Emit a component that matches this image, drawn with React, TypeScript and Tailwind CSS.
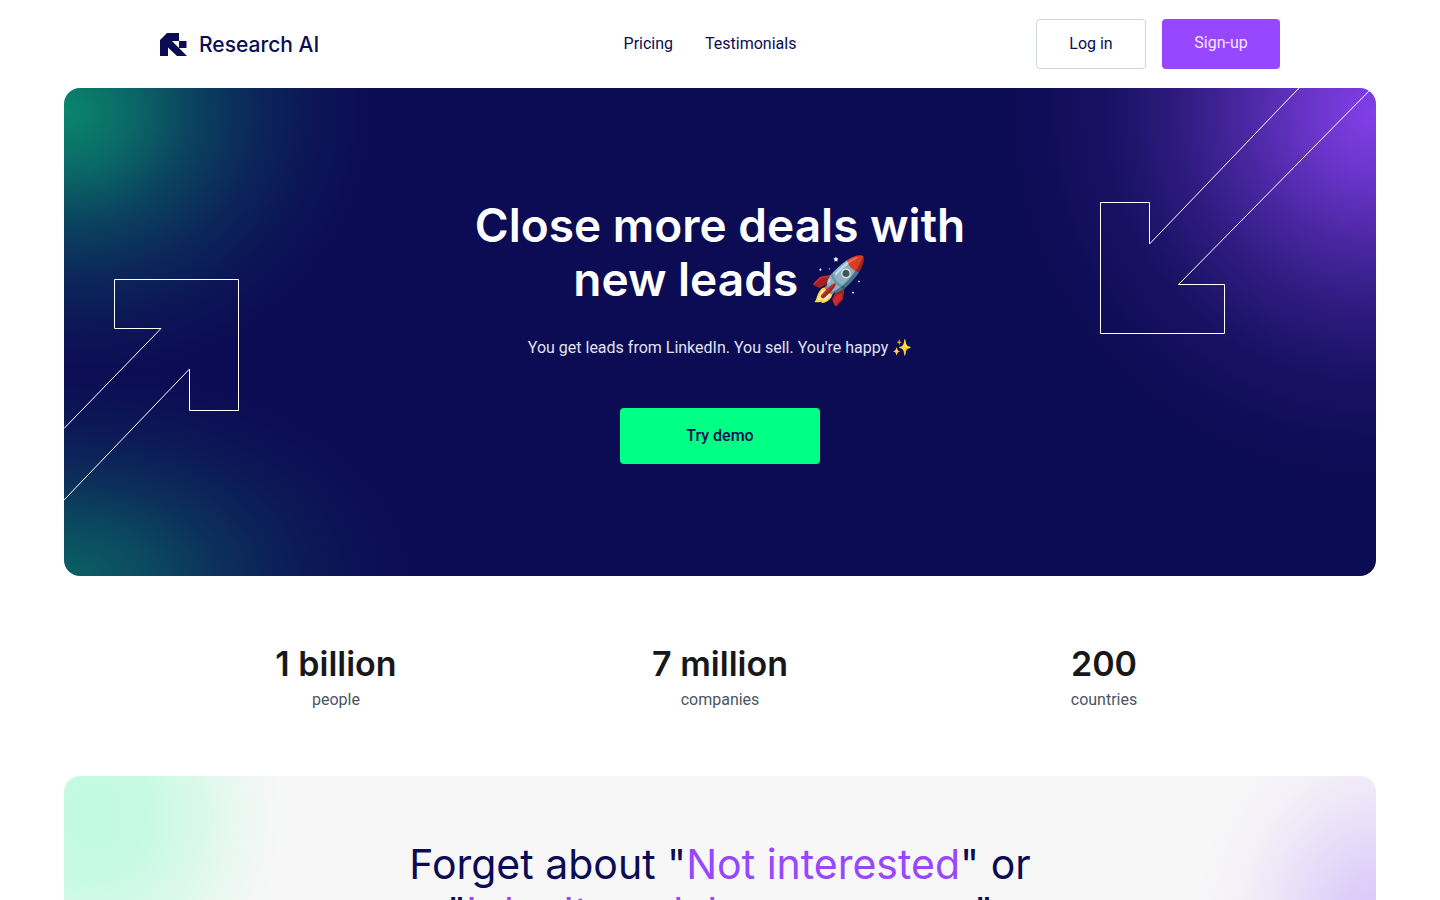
import React from 'react';

interface StatItem {
  value: string;
  label: string;
}

const stats: StatItem[] = [
  { value: '1 billion', label: 'people' },
  { value: '7 million', label: 'companies' },
  { value: '200', label: 'countries' },
];

function Logo() {
  return (
    <a href="#" className="flex items-center gap-3 text-[#0c0c54]">
      <svg width="27" height="23" viewBox="0 0 27 23" fill="currentColor">
        <path d="M7 0H19V8H12L27 23H17L8 14.5V23H0V7Z" />
        <path d="M19 8H26.5V15H19Z" />
      </svg>
      <span className="pt-px font-[Inter,sans-serif] text-[21px] leading-6 font-medium whitespace-nowrap">
        Research AI
      </span>
    </a>
  );
}

function Header() {
  return (
    <header className="mx-auto grid h-[88px] w-full max-w-[1120px] grid-cols-[1fr_auto_1fr] items-center text-[#0c0c54]">
      <Logo />
      <nav className="flex gap-8 pr-5">
        <a href="#pricing">Pricing</a>
        <a href="#testimonials">Testimonials</a>
      </nav>
      <div className="flex justify-end gap-4">
        <button className="h-[50px] min-w-[110px] rounded border border-[#cbd5e1] px-8">
          Log in
        </button>
        <button className="h-[50px] min-w-[118px] rounded bg-[#9747ff] px-8 pb-0.5 text-[#f3e8ff]">
          Sign-up
        </button>
      </div>
    </header>
  );
}

function Hero() {
  return (
    <section className="relative mx-16 overflow-hidden rounded-2xl bg-[#0c0c54] bg-[radial-gradient(310px_270px_at_0_24px,#0a866d_0%,#0a866dc0_22%,#0a866d70_42%,#0a866d38_62%,#0a866d12_82%,#0a866d00_100%),radial-gradient(350px_210px_at_0_100%,#0b6064_0%,#0b6064b8_25%,#0b60646b_45%,#0b606433_65%,#0b606412_83%,#0b606400_100%),radial-gradient(370px_370px_at_100%_24px,#8440ea_0%,#8440eac0_20%,#8440ea80_37%,#8440ea48_54%,#8440ea1c_72%,#8440ea08_88%,#8440ea00_100%)] px-6 pt-[110px] pb-28 text-center">
      <svg
        className="absolute top-0 left-0"
        width="200"
        height="488"
        fill="none"
        stroke="white"
      >
        <path d="M0 340.5L97 240.5H50.5V191.5H174.5V322.5H125.5V281L0 412" />
      </svg>
      <svg
        className="absolute top-0 right-0"
        width="300"
        height="488"
        fill="none"
        stroke="white"
      >
        <path d="M223 0L73.5 156V114.5H24.5V245.5H148.5V196.5H102.5L294 2" />
      </svg>
      <div className="relative flex flex-col items-center">
        <h1 className="max-w-[560px] font-[Inter,sans-serif] text-[46px] leading-[54px] font-semibold text-white">
          Close more deals with new leads 🚀
        </h1>
        <p className="mt-7 leading-7 text-[#e2e2f0]">
          You get leads from LinkedIn. You sell. You're happy ✨
        </p>
        <button className="mt-[46px] h-14 w-[200px] rounded bg-[#00ff85] font-medium text-[#0c0c54]">
          Try demo
        </button>
      </div>
    </section>
  );
}

function Stats() {
  return (
    <section className="mx-auto grid max-w-[1152px] grid-cols-3 py-16 text-center">
      {stats.map((item) => (
        <div key={item.label}>
          <p className="font-[Inter,sans-serif] text-[34px] leading-12 font-semibold text-[#18181b]">
            {item.value}
          </p>
          <p className="leading-6 text-[#4b5563]">{item.label}</p>
        </div>
      ))}
    </section>
  );
}

function Objections() {
  return (
    <section className="mx-16 rounded-2xl bg-[#f7f7f7] bg-[radial-gradient(190px_210px_at_30px_40px,#bffae0_0%,#bffae0d8_30%,#bffae088_55%,#bffae02c_80%,#bffae000_100%),radial-gradient(180px_220px_at_100%_150px,#d8c2fa_0%,#d8c2fab8_25%,#d8c2fa68_50%,#d8c2fa24_75%,#d8c2fa00_100%)] px-6 py-16 text-center">
      <h2 className="mx-auto max-w-[640px] font-[Inter,sans-serif] text-[41px] leading-12 text-[#0c0c54]">
        Forget about "<span className="text-[#9747ff]">Not interested</span>" or
        "<span className="text-[#9747ff]">I don't work here anymore</span>"
      </h2>
    </section>
  );
}

export default function App() {
  return (
    <div className="min-h-screen bg-white font-[Roboto,sans-serif] text-base">
      <Header />
      <main>
        <Hero />
        <Stats />
        <Objections />
      </main>
    </div>
  );
}
